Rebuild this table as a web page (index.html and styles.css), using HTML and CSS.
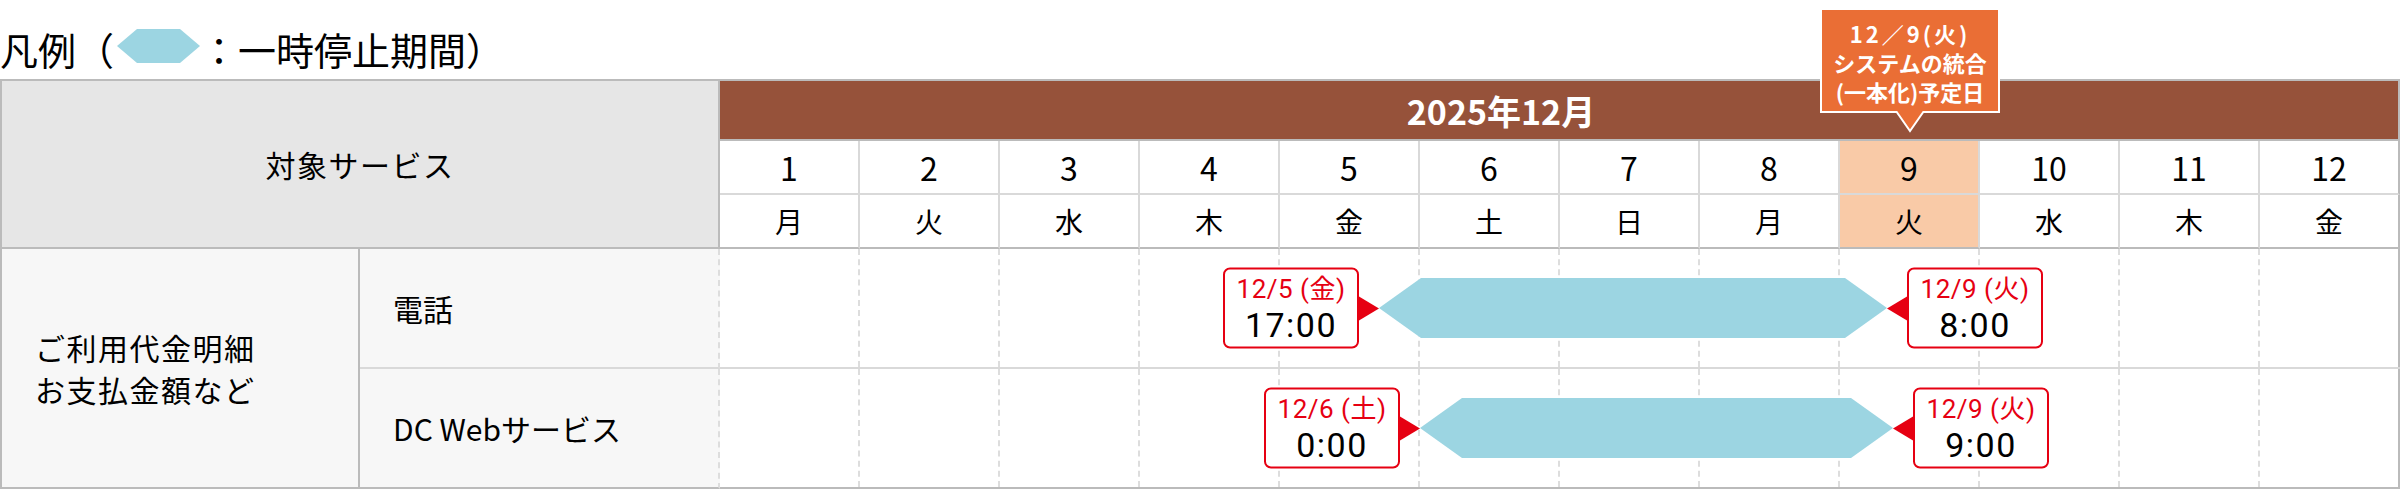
FILE: index.html
```html
<!DOCTYPE html>
<html lang="ja">
<head>
  <meta charset="UTF-8">
  <meta name="viewport" content="width=device-width, initial-scale=1.0">
  <title>一時停止期間のお知らせ</title>
  <link rel="stylesheet" href="styles.css">
</head>
<body>

  <div class="legend">
    凡例（<svg class="legend-hex" width="83" height="34" viewBox="0 0 83 34"><polygon points="0,17 20,0 63,0 83,17 63,34 20,34" fill="#9cd5e2"/></svg>：一時停止期間）
  </div>

  <div class="sched">
    <div class="head-service">対象サービス</div>
    <div class="head-month">
      2025年12月
      <div class="callout">
        <p class="callout-date">12／9(火)</p>
        <p>システムの統合</p>
        <p>(一本化)予定日</p>
        <svg class="callout-tail" width="30" height="22" viewBox="0 0 30 22"><polyline points="1,0 15,20 29,0" fill="#ea6e35" stroke="#fff" stroke-width="2"/></svg>
      </div>
    </div>

    <!-- 日付 -->
    <div class="day">1</div>
    <div class="day">2</div>
    <div class="day">3</div>
    <div class="day">4</div>
    <div class="day">5</div>
    <div class="day">6</div>
    <div class="day">7</div>
    <div class="day">8</div>
    <div class="day hl">9</div>
    <div class="day">10</div>
    <div class="day">11</div>
    <div class="day">12</div>

    <!-- 曜日 -->
    <div class="wd">月</div>
    <div class="wd">火</div>
    <div class="wd">水</div>
    <div class="wd">木</div>
    <div class="wd">金</div>
    <div class="wd">土</div>
    <div class="wd">日</div>
    <div class="wd">月</div>
    <div class="wd hl">火</div>
    <div class="wd">水</div>
    <div class="wd">木</div>
    <div class="wd">金</div>

    <div class="cat">ご利用代金明細<br>お支払金額など</div>

    <div class="svc">電話</div>
    <div class="track">
      <div class="lane"></div><div class="lane"></div><div class="lane"></div><div class="lane"></div>
      <div class="lane"></div><div class="lane"></div><div class="lane"></div><div class="lane"></div>
      <div class="lane"></div><div class="lane"></div><div class="lane"></div><div class="lane"></div>
      <!-- 12/5 17:00 〜 12/9 8:00 (1日 = 140px) -->
      <div class="stop" style="left: 659px; width: 508px;">
        <div class="bar"></div>
        <div class="tag from"><p class="tag-date">12/5 (金)</p><p class="tag-time">17:00</p></div>
        <div class="tag to"><p class="tag-date">12/9 (火)</p><p class="tag-time">8:00</p></div>
      </div>
    </div>

    <div class="svc last">DC Webサービス</div>
    <div class="track last">
      <div class="lane"></div><div class="lane"></div><div class="lane"></div><div class="lane"></div>
      <div class="lane"></div><div class="lane"></div><div class="lane"></div><div class="lane"></div>
      <div class="lane"></div><div class="lane"></div><div class="lane"></div><div class="lane"></div>
      <!-- 12/6 0:00 〜 12/9 9:00 -->
      <div class="stop" style="left: 700px; width: 473px;">
        <div class="bar"></div>
        <div class="tag from"><p class="tag-date">12/6 (土)</p><p class="tag-time">0:00</p></div>
        <div class="tag to"><p class="tag-date">12/9 (火)</p><p class="tag-time">9:00</p></div>
      </div>
    </div>
  </div>

</body>
</html>
```

FILE: styles.css
```css
* { box-sizing: border-box; }
body { margin: 0; font-family: "Noto Sans CJK JP", sans-serif; color: #000; background: #fff; }
p { margin: 0; }

/* 凡例 */
.legend { display: flex; align-items: center; height: 42px; margin-top: 28px; margin-bottom: 9px; font-size: 38px; line-height: 42px; white-space: nowrap; }
.legend-hex { margin: -6px 0 0 3px; display: block; }

/* 表 */
.sched { display: grid; width: 2400px; grid-template-columns: 360px 360px repeat(12, 140px); grid-template-rows: 62px 54px 54px 120px 120px; }

.head-service { grid-column: 1 / 3; grid-row: 1 / 4; background: #e6e6e6; border: 2px solid #bbb; display: flex; align-items: center; justify-content: center; font-size: 30px; letter-spacing: 1.5px; }
.head-month { grid-column: 3 / 15; position: relative; background: #96523a; color: #fff; border-top: 2px solid #bbb; border-bottom: 2px solid #bbb; border-right: 2px solid #bbb; display: flex; align-items: center; justify-content: center; padding-right: 116px; font-size: 34px; font-weight: bold; }

.callout { position: absolute; top: -73px; left: 1190px; transform: translateX(-50%); width: 180px; height: 105px; padding-top: 9px; background: #ea6e35; border: 2px solid #fff; text-align: center; font-size: 22px; line-height: 29px; font-weight: bold; color: #fff; white-space: nowrap; }
.callout-date { letter-spacing: 3px; }
.callout-tail { position: absolute; top: 100%; left: 50%; transform: translateX(-50%); display: block; }

.day, .wd { display: flex; align-items: center; justify-content: center; border-right: 2px solid #d9d9d9; border-bottom: 2px solid #d9d9d9; background: #fff; }
.day { font-size: 32px; }
.wd { font-size: 28px; border-bottom-color: #bbb; }
.day:nth-child(14), .wd:nth-child(26) { border-right-color: #bbb; }
.hl { background: #f9caa7; }

.cat { grid-column: 1; grid-row: 4 / 6; background: #f7f7f7; border: 2px solid #bbb; border-top: none; display: flex; align-items: center; padding-left: 33px; font-size: 30px; line-height: 42px; letter-spacing: 1.5px; }
.svc { grid-column: 2; background: #f7f7f7; border-right: 2px dashed #ddd; border-bottom: 2px solid #d9d9d9; display: flex; align-items: center; padding-left: 33px; font-size: 30px; }
.svc.last { border-bottom-color: #bbb; }

.track { grid-column: 3 / 15; position: relative; display: grid; grid-template-columns: repeat(12, 140px); border-bottom: 2px solid #d9d9d9; }
.track.last { border-bottom-color: #bbb; }
.lane { border-right: 2px dashed #ddd; }
.lane:nth-child(12) { border-right: 2px solid #bbb; }

/* 一時停止期間 */
.stop { position: absolute; top: 0; bottom: 0; }
.bar { position: absolute; left: 0; right: 0; top: 50%; height: 60px; margin-top: -30px; background: #9cd5e2; clip-path: polygon(0 50%, 42px 0, calc(100% - 42px) 0, 100% 50%, calc(100% - 42px) 100%, 42px 100%); }

.tag { position: absolute; top: 50%; transform: translateY(-50%); width: 136px; height: 81px; padding-top: 4px; background: #fff; border: 2px solid #e60012; border-radius: 7px; text-align: center; white-space: nowrap; font-family: Roboto, "Noto Sans CJK JP", sans-serif; }
.tag.from { right: calc(100% + 20px); }
.tag.to { left: calc(100% + 20px); }
.tag::after { content: ""; position: absolute; top: 50%; margin-top: -12px; border-top: 12px solid transparent; border-bottom: 12px solid transparent; }
.tag.from::after { left: calc(100% + 2px); border-left: 20px solid #e60012; }
.tag.to::after { right: calc(100% + 2px); border-right: 20px solid #e60012; }
.tag-date { color: #e60012; font-size: 26px; line-height: 31px; letter-spacing: 0.5px; }
.tag-time { font-size: 34px; line-height: 40px; letter-spacing: 1.5px; }
```
